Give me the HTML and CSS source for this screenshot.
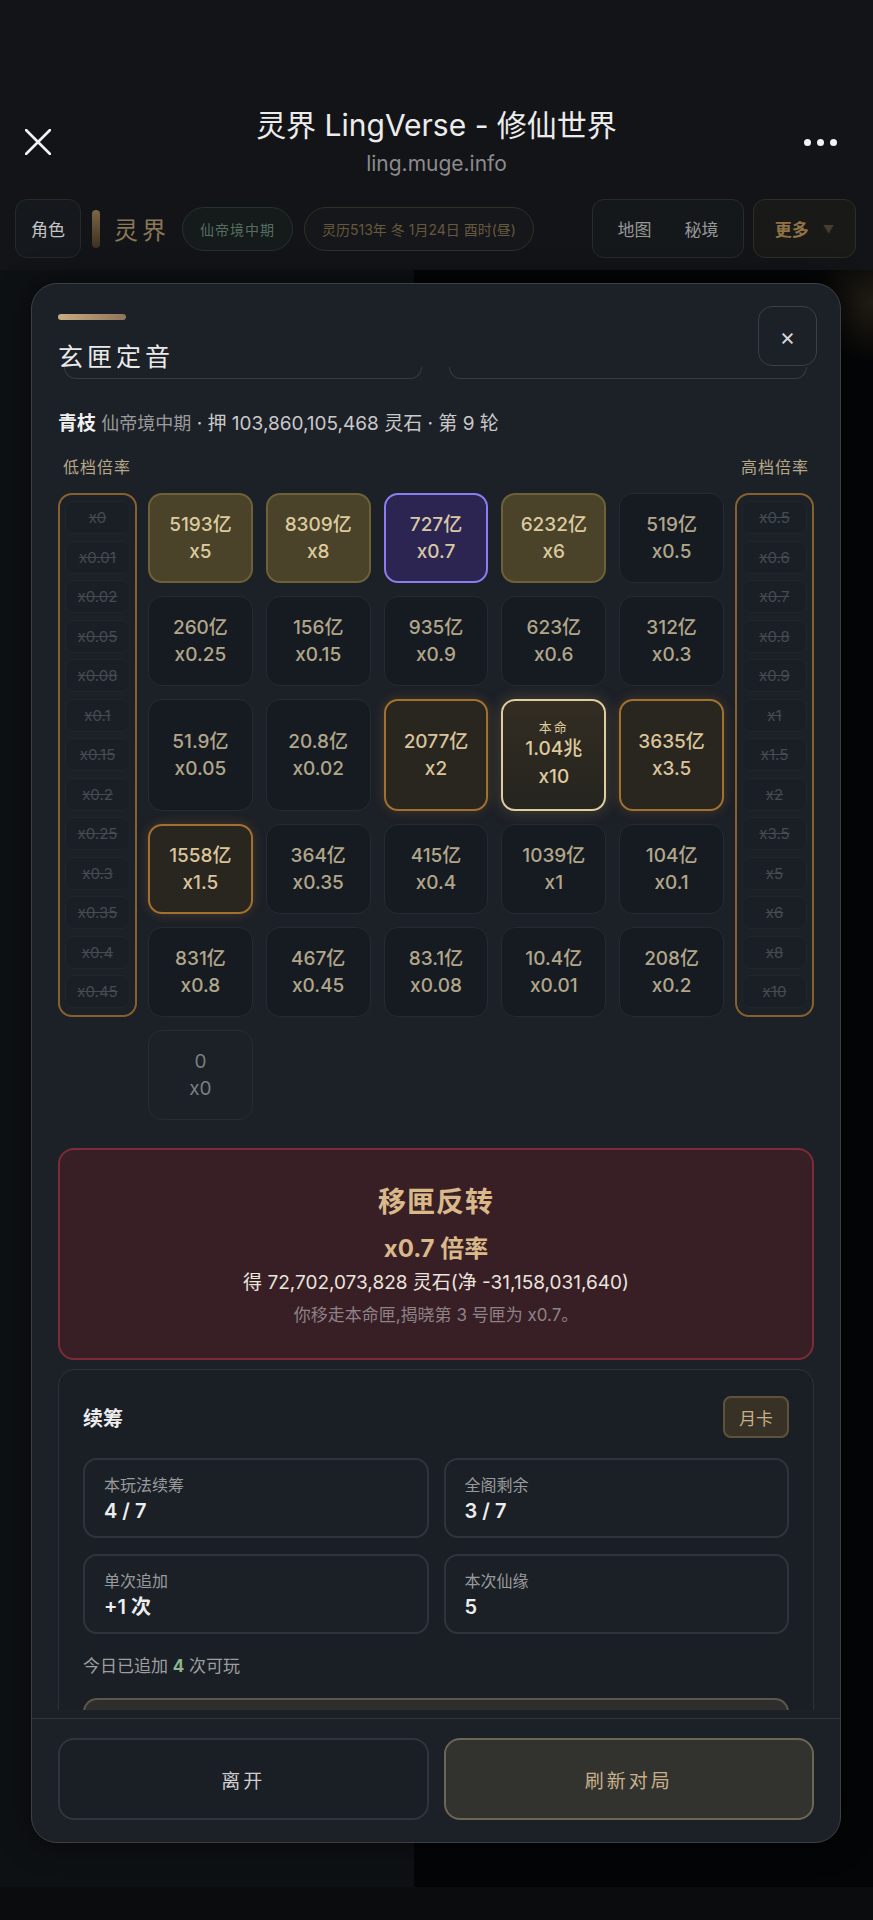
FILE: index.html
```html
<!DOCTYPE html>
<html lang="zh-CN">
<head>
    <meta charset="UTF-8">
    <meta name="viewport" content="width=device-width, initial-scale=1.0">
    <title>灵界 LingVerse - 修仙世界</title>
    <link rel="stylesheet" href="styles.css">
</head>
<body>
    <div class="topbar">
        <svg class="tb-close" width="26" height="26" viewBox="0 0 26 26">
            <path d="M1 1 L25 25 M25 1 L1 25" stroke="#f2f2f2" stroke-width="2.6" stroke-linecap="round"/>
        </svg>
        <div class="tb-title">
            <div class="tb-name">灵界 LingVerse - 修仙世界</div>
            <div class="tb-url">ling.muge.info</div>
        </div>
        <div class="tb-more"><i></i><i></i><i></i></div>
    </div>

    <div class="appnav">
        <div class="nav-btn">角色</div>
        <div class="nav-mark"></div>
        <div class="nav-logo">灵界</div>
        <div class="pill pill-realm">仙帝境中期</div>
        <div class="pill pill-date">灵历513年 冬 1月24日 酉时(昼)</div>
        <div class="nav-group">
            <span>地图</span>
            <span>秘境</span>
        </div>
        <div class="nav-more">更多 <em>▼</em></div>
    </div>

    <div class="stage">
        <div class="stage-left"></div>
        <div class="stage-right"></div>
    </div>
    <div class="bottombar"></div>

    <div class="modal">
        <div class="modal-head">
            <div class="head-left">
                <div class="head-bar"></div>
                <h1 class="head-title">玄匣定音</h1>
            </div>
            <div class="head-close">×</div>
        </div>

        <div class="modal-body">
            <div class="peek">
                <div></div>
                <div></div>
            </div>

            <p class="info"><b>青枝</b> <span class="info-realm">仙帝境中期</span> · 押 103,860,105,468 灵石 · 第 9 轮</p>

            <div class="rail-labels">
                <span>低档倍率</span>
                <span>高档倍率</span>
            </div>

            <div class="board">
                <div class="rail">
                    <div>x0</div><div>x0.01</div><div>x0.02</div><div>x0.05</div><div>x0.08</div>
                    <div>x0.1</div><div>x0.15</div><div>x0.2</div><div>x0.25</div><div>x0.3</div>
                    <div>x0.35</div><div>x0.4</div><div>x0.45</div>
                </div>

                <div class="boxes">
                    <div class="box gold"><span>5193亿</span><span>x5</span></div>
                    <div class="box gold"><span>8309亿</span><span>x8</span></div>
                    <div class="box picked"><span>727亿</span><span>x0.7</span></div>
                    <div class="box gold"><span>6232亿</span><span>x6</span></div>
                    <div class="box"><span>519亿</span><span>x0.5</span></div>

                    <div class="box"><span>260亿</span><span>x0.25</span></div>
                    <div class="box"><span>156亿</span><span>x0.15</span></div>
                    <div class="box"><span>935亿</span><span>x0.9</span></div>
                    <div class="box"><span>623亿</span><span>x0.6</span></div>
                    <div class="box"><span>312亿</span><span>x0.3</span></div>

                    <div class="box"><span>51.9亿</span><span>x0.05</span></div>
                    <div class="box"><span>20.8亿</span><span>x0.02</span></div>
                    <div class="box hot"><span>2077亿</span><span>x2</span></div>
                    <div class="box own"><small>本命</small><span>1.04兆</span><span class="own-x">x10</span></div>
                    <div class="box hot"><span>3635亿</span><span>x3.5</span></div>

                    <div class="box hot"><span>1558亿</span><span>x1.5</span></div>
                    <div class="box"><span>364亿</span><span>x0.35</span></div>
                    <div class="box"><span>415亿</span><span>x0.4</span></div>
                    <div class="box"><span>1039亿</span><span>x1</span></div>
                    <div class="box"><span>104亿</span><span>x0.1</span></div>

                    <div class="box"><span>831亿</span><span>x0.8</span></div>
                    <div class="box"><span>467亿</span><span>x0.45</span></div>
                    <div class="box"><span>83.1亿</span><span>x0.08</span></div>
                    <div class="box"><span>10.4亿</span><span>x0.01</span></div>
                    <div class="box"><span>208亿</span><span>x0.2</span></div>

                    <div class="box empty"><span>0</span><span>x0</span></div>
                </div>

                <div class="rail">
                    <div>x0.5</div><div>x0.6</div><div>x0.7</div><div>x0.8</div><div>x0.9</div>
                    <div>x1</div><div>x1.5</div><div>x2</div><div>x3.5</div><div>x5</div>
                    <div>x6</div><div>x8</div><div>x10</div>
                </div>
            </div>

            <div class="result">
                <div class="result-title">移匣反转</div>
                <div class="result-rate">x0.7 倍率</div>
                <div class="result-gain">得 72,702,073,828 灵石(净 -31,158,031,640)</div>
                <div class="result-note">你移走本命匣,揭晓第 3 号匣为 x0.7。</div>
            </div>

            <div class="refill">
                <div class="refill-head">
                    <h2>续筹</h2>
                    <div class="card-btn">月卡</div>
                </div>
                <div class="stats">
                    <div class="stat"><label>本玩法续筹</label><strong>4 / 7</strong></div>
                    <div class="stat"><label>全阁剩余</label><strong>3 / 7</strong></div>
                    <div class="stat"><label>单次追加</label><strong>+1 次</strong></div>
                    <div class="stat"><label>本次仙缘</label><strong>5</strong></div>
                </div>
                <p class="today">今日已追加 <b>4</b> 次可玩</p>
                <div class="refill-btn"></div>
            </div>
        </div>

        <div class="modal-foot">
            <div class="foot-btn">离开</div>
            <div class="foot-btn primary">刷新对局</div>
        </div>
    </div>
</body>
</html>
```

FILE: styles.css
```css
body {
    margin: 0;
    padding: 0;
    width: 873px;
    height: 1920px;
    position: relative;
    overflow: hidden;
    background-color: #131417;
    font-family: Inter, "Noto Sans CJK SC", sans-serif;
    color: #e6e6e6;
}

/* 顶部标题栏 */
.topbar {
    height: 190px;
    box-sizing: border-box;
    padding-top: 107px;
    display: grid;
    grid-template-columns: 120px 1fr 120px;
    align-items: start;
}
.tb-close {
    margin-left: 25px;
    margin-top: 22px;
}
.tb-title {
    text-align: center;
}
.tb-name {
    font-size: 30px;
    line-height: 36px;
    color: #ececec;
}
.tb-url {
    margin-top: 8px;
    font-size: 21px;
    line-height: 26px;
    color: #8b8b8d;
}
.tb-more {
    display: flex;
    justify-content: flex-end;
    gap: 6px;
    padding-right: 36px;
    margin-top: 32px;
}
.tb-more i {
    width: 7px;
    height: 7px;
    border-radius: 50%;
    background-color: #f2f2f2;
}

/* 应用导航 */
.appnav {
    height: 59px;
    margin-top: 9px;
    padding: 0 17px 0 15px;
    display: flex;
    align-items: center;
}
.nav-btn {
    width: 66px;
    height: 59px;
    box-sizing: border-box;
    border: 1px solid #24292e;
    border-radius: 12px;
    background-color: #15191d;
    display: flex;
    align-items: center;
    justify-content: center;
    font-size: 17px;
    color: #c4c4c4;
}
.nav-mark {
    width: 8px;
    height: 38px;
    margin-left: 11px;
    border-radius: 4px;
    background: linear-gradient(180deg, #7d6645, #3b3022);
}
.nav-logo {
    margin-left: 14px;
    font-size: 24px;
    letter-spacing: 4px;
    color: #8a7857;
}
.pill {
    height: 44px;
    box-sizing: border-box;
    border-radius: 22px;
    padding: 0 17px;
    display: flex;
    align-items: center;
    font-size: 14px;
}
.pill-realm {
    margin-left: 12px;
    background-color: #141b1a;
    border: 1px solid #26322e;
    color: #566e62;
    letter-spacing: 1px;
}
.pill-date {
    margin-left: 11px;
    background-color: #16171a;
    border: 1px solid #332f26;
    color: #66583f;
}
.nav-group {
    margin-left: auto;
    width: 152px;
    height: 59px;
    box-sizing: border-box;
    border: 1px solid #272b30;
    border-radius: 12px;
    background-color: #15181b;
    display: flex;
    align-items: center;
    justify-content: space-around;
    padding: 0 8px;
    font-size: 17px;
    color: #979797;
}
.nav-more {
    margin-left: 9px;
    width: 103px;
    height: 59px;
    box-sizing: border-box;
    border: 1px solid #302d27;
    border-radius: 12px;
    background-color: #191917;
    display: flex;
    align-items: center;
    justify-content: center;
    gap: 14px;
    font-size: 17px;
    font-weight: 700;
    color: #8f7346;
}
.nav-more em {
    font-style: normal;
    font-size: 11px;
    color: #463d30;
}

/* 背景区域 */
.stage {
    margin-top: 12px;
    height: 1617px;
    display: flex;
}
.stage-left {
    width: 414px;
    background-color: #0e1114;
}
.stage-right {
    flex: 1;
    background: radial-gradient(circle at 100% 2%, rgba(120, 100, 60, 0.25), rgba(0, 0, 0, 0) 60px), #040506;
}
.bottombar {
    height: 33px;
    background-color: #0b0c0d;
}

/* 弹窗 */
.modal {
    position: absolute;
    left: 31px;
    top: 283px;
    width: 810px;
    height: 1560px;
    box-sizing: border-box;
    border: 1px solid #3b4045;
    border-radius: 26px;
    background-color: #1c2027;
    box-shadow: 0 0 30px rgba(0, 0, 0, 0.6);
    display: flex;
    flex-direction: column;
    overflow: hidden;
}
.modal-head {
    padding: 22px 23px 0 26px;
    height: 83px;
    box-sizing: border-box;
    display: flex;
    justify-content: space-between;
    align-items: flex-start;
}
.head-bar {
    margin-top: 8px;
    width: 68px;
    height: 6px;
    border-radius: 3px;
    background: linear-gradient(90deg, #c9ad82, #8e7558);
}
.head-title {
    margin: 22px 0 0;
    font-size: 25px;
    line-height: 30px;
    font-weight: 400;
    letter-spacing: 4px;
    color: #eaeaea;
}
.head-close {
    width: 59px;
    height: 60px;
    box-sizing: border-box;
    border: 1px solid #3a4047;
    border-radius: 14px;
    display: flex;
    align-items: center;
    justify-content: center;
    font-size: 24px;
    color: #d8d8d8;
}

.modal-body {
    flex: 1;
    min-height: 0;
    overflow: hidden;
    padding: 0 26px;
    margin-bottom: 8px;
}
.peek {
    display: grid;
    grid-template-columns: 1fr 1fr;
    gap: 27px;
    padding: 0 7px 0 6px;
}
.peek div {
    height: 11px;
    border: 1px solid #363c43;
    border-top: none;
    border-radius: 0 0 12px 12px;
}

.info {
    margin: 32px 0 0;
    font-size: 19px;
    line-height: 26px;
    color: #c9c9c9;
}
.info b {
    color: #f0f0f0;
}
.info-realm {
    font-size: 18px;
    color: #9a9a9a;
}

.rail-labels {
    margin-top: 20px;
    padding: 0 5px;
    display: flex;
    justify-content: space-between;
    font-size: 16px;
    line-height: 20px;
    letter-spacing: 1px;
    color: #b6a887;
}

/* 匣子面板 */
.board {
    margin-top: 16px;
    display: grid;
    grid-template-columns: 79px 1fr 79px;
    column-gap: 11px;
    align-items: start;
}
.rail {
    box-sizing: border-box;
    border: 2px solid #86612f;
    border-radius: 14px;
    padding: 6px 5px 7px;
    display: flex;
    flex-direction: column;
    gap: 6.5px;
}
.rail div {
    height: 33px;
    box-sizing: border-box;
    border: 1px solid #20262c;
    border-radius: 8px;
    background-color: #1a1f25;
    display: flex;
    align-items: center;
    justify-content: center;
    font-size: 15px;
    color: #454b52;
    text-decoration: line-through;
}
.boxes {
    display: grid;
    grid-template-columns: repeat(5, 1fr);
    gap: 13px;
}
.box {
    min-height: 90px;
    box-sizing: border-box;
    border: 1px solid #252b33;
    border-radius: 14px;
    background-color: #161b22;
    display: flex;
    flex-direction: column;
    align-items: center;
    justify-content: center;
    font-size: 19px;
    font-weight: 500;
    line-height: 27px;
    color: #b2a68a;
}
.box.gold {
    background-color: #4a4229;
    border: 2px solid #6c6138;
    color: #dccb9f;
}
.box.picked {
    background-color: #2d2551;
    border: 2px solid #8c7cf2;
    color: #d7c8a6;
}
.box.hot {
    background-color: #29251f;
    border: 2px solid #a2712f;
    box-shadow: 0 0 12px rgba(190, 130, 50, 0.25);
    color: #d9c49b;
}
.box.own {
    padding: 17px 0;
    background: linear-gradient(180deg, #332d22, #25241f);
    border: 2px solid #e0cd9f;
    box-shadow: 0 0 16px rgba(210, 170, 100, 0.25);
    color: #dfcb9f;
    line-height: 26px;
}
.box.own small {
    font-size: 13px;
    line-height: 18px;
    font-weight: 400;
    letter-spacing: 2px;
}
.box.own .own-x {
    line-height: 30px;
}
.box.empty {
    background-color: #1c2027;
    border-color: #272c33;
    color: #7b7e82;
    font-weight: 400;
}

/* 结果 */
.result {
    margin-top: 28px;
    box-sizing: border-box;
    border: 2px solid #7d2b37;
    border-radius: 16px;
    background-color: #381f26;
    padding: 34px 0 32px;
    text-align: center;
}
.result-title {
    font-size: 28px;
    line-height: 36px;
    font-weight: 700;
    letter-spacing: 1px;
    color: #d9b98a;
}
.result-rate {
    margin-top: 13px;
    font-size: 24px;
    line-height: 32px;
    font-weight: 700;
    color: #d9b98a;
}
.result-gain {
    margin-top: 5px;
    font-size: 19px;
    line-height: 26px;
    color: #ebe4dc;
}
.result-note {
    margin-top: 8px;
    font-size: 17px;
    line-height: 22px;
    color: #8f8286;
}

/* 续筹 */
.refill {
    margin-top: 9px;
    border: 1px solid #2d333a;
    border-radius: 16px;
    background-color: #1a1f26;
    padding: 26px 24px 30px;
}
.refill-head {
    display: flex;
    justify-content: space-between;
    align-items: center;
}
.refill-head h2 {
    margin: 0;
    font-size: 20px;
    font-weight: 700;
    color: #ececec;
}
.card-btn {
    width: 66px;
    height: 42px;
    box-sizing: border-box;
    border: 2px solid #5e523d;
    border-radius: 8px;
    background-color: #383226;
    display: flex;
    align-items: center;
    justify-content: center;
    font-size: 17px;
    color: #c8b089;
}
.stats {
    margin-top: 20px;
    display: grid;
    grid-template-columns: 1fr 1fr;
    column-gap: 15px;
    row-gap: 16px;
}
.stat {
    height: 80px;
    box-sizing: border-box;
    border: 2px solid #2e343b;
    border-radius: 14px;
    background-color: #1b2027;
    padding: 15px 19px 0;
}
.stat label {
    display: block;
    font-size: 16px;
    line-height: 20px;
    color: #999a9c;
}
.stat strong {
    display: block;
    margin-top: 3px;
    font-size: 20px;
    line-height: 26px;
    font-weight: 600;
    color: #ededed;
}
.today {
    margin: 21px 0 0;
    font-size: 17px;
    line-height: 22px;
    color: #9d9e9f;
}
.today b {
    color: #8fb58f;
}
.refill-btn {
    margin-top: 21px;
    height: 52px;
    box-sizing: border-box;
    border: 2px solid #5d574b;
    border-radius: 14px;
    background-color: #2e2e2d;
}

/* 底部按钮 */
.modal-foot {
    border-top: 1px solid #30353c;
    padding: 19px 26px 22px;
    display: grid;
    grid-template-columns: 1fr 1fr;
    gap: 15px;
}
.foot-btn {
    height: 82px;
    box-sizing: border-box;
    border: 2px solid #2f353c;
    border-radius: 16px;
    background-color: #1a1f26;
    display: flex;
    align-items: center;
    justify-content: center;
    font-size: 19px;
    letter-spacing: 3px;
    color: #cfcfcf;
}
.foot-btn.primary {
    border-color: #6d6556;
    background-color: #32322f;
    color: #c8b089;
}
```
